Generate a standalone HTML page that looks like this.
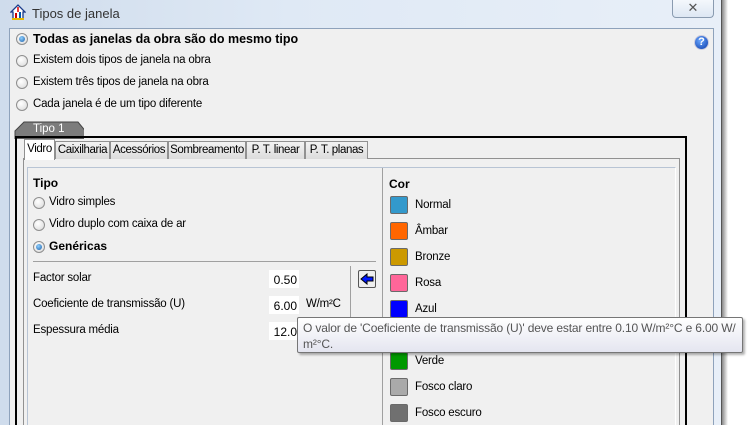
<!DOCTYPE html>
<html><head><meta charset="utf-8"><style>
*{margin:0;padding:0;box-sizing:border-box}
html,body{width:756px;height:425px;overflow:hidden}
body{background:#fff;font-family:"Liberation Sans",Tahoma,sans-serif;font-size:12px;color:#000;position:relative}
.a{position:absolute;white-space:nowrap}
.radio{position:absolute;width:12px;height:12px;border-radius:50%;border:1px solid #8f8f8f;background:radial-gradient(circle at 40% 35%,#fff,#d8d8d8)}
.radio.on::after{content:"";position:absolute;left:2px;top:2px;width:6px;height:6px;border-radius:50%;background:radial-gradient(circle at 40% 35%,#8fd0ff,#1c5fa8)}
.tab{position:absolute;top:141px;height:18px;border:1px solid #919191;border-bottom:none;background:linear-gradient(#f2f2f2,#dcdcdc);padding:2px 0 0;font-size:11.5px;letter-spacing:-0.4px;text-align:center;overflow:hidden;white-space:nowrap}
.inp{position:absolute;left:268px;width:32px;height:20px;background:#fff;border:1px solid #f0f0f0;text-align:right;padding:3px 2px 0 0}
.sw{position:absolute;left:390px;width:18px;height:18px;border:1px solid #6a6a6a;border-radius:2px}
.lbl{position:absolute;left:415px}
.t{font-size:11.5px;letter-spacing:-0.2px}
</style></head><body>
<div class="a" style="left:0;top:0;width:722px;height:425px;background:linear-gradient(90deg,#cfdcec,#dfe9f5 40%,#e8eff8);border-right:1px solid #555"></div>
<div class="a" style="left:722px;top:0;width:6px;height:425px;background:linear-gradient(90deg,#888,#fff)"></div>
<div class="a" style="left:9px;top:28px;width:705px;height:397px;background:#f0f0f0;border:1px solid #8ea2bb;border-bottom:none"></div>
<svg class="a" style="left:10px;top:4px" width="16" height="16" viewBox="0 0 16 16"><path d="M1 8 L8 1 L15 8 L13 8 L13 15 L3 15 L3 8Z" fill="#fff" stroke="#1a3a8a" stroke-width="1.3"/><rect x="5" y="9" width="2" height="5" fill="#c00"/><rect x="9" y="8" width="2" height="6" fill="#05a"/><path d="M8 3 L8 8" stroke="#d00" stroke-width="1.5"/><rect x="2" y="14" width="12" height="2" fill="#e6b800"/></svg>
<div class="a" style="left:32px;top:6px;font-size:13px;color:#333">Tipos de janela</div>
<div class="a" style="left:672px;top:0;width:42px;height:18px;border:1px solid #8a9bb0;border-top:none;border-radius:0 0 4px 4px;background:linear-gradient(#f4f8fc,#dde7f3);text-align:center;font-size:13px;color:#555;line-height:16px">✕</div>
<div class="a" style="left:694px;top:35px;width:15px;height:15px;border-radius:50%;background:radial-gradient(circle at 40% 35%,#6aa7ff,#0a3aa8);border:1px solid #ccd;color:#fff;font-weight:bold;font-size:11px;text-align:center;line-height:13px">?</div>
<div class="radio on" style="left:16px;top:33px"></div><div class="a" style="left:33px;top:32px;font-weight:bold;font-size:12.5px">Todas as janelas da obra são do mesmo tipo</div>
<div class="radio" style="left:16px;top:55px"></div><div class="a t" style="left:33px;top:54px">Existem dois tipos de janela na obra</div>
<div class="radio" style="left:16px;top:77px"></div><div class="a t" style="left:33px;top:76px">Existem três tipos de janela na obra</div>
<div class="radio" style="left:16px;top:99px"></div><div class="a t" style="left:33px;top:98px">Cada janela é de um tipo diferente</div>
<svg class="a" style="left:14px;top:121px" width="70" height="18"><path d="M1 18 L1 10 L10 1 L64 1 L78 18Z" fill="#7c7c7c" stroke="#444"/></svg>
<div class="a" style="left:33px;top:123px;color:#fff;font-size:11.5px">Tipo 1</div>
<div class="a" style="left:15px;top:136px;width:672px;height:300px;border:2px solid #000;border-bottom:none"></div>
<div class="a" style="left:23px;top:158px;width:657px;height:280px;border:1px solid #919191;background:#f0f0f0"></div>
<div class="tab" style="left:24px;top:139px;width:31px;height:21px;background:#fff;padding-top:3px">Vidro</div>
<div class="tab" style="left:55px;width:55px">Caixilharia</div>
<div class="tab" style="left:110px;width:58px">Acessórios</div>
<div class="tab" style="left:168px;width:78px">Sombreamento</div>
<div class="tab" style="left:246px;width:59px">P. T. linear</div>
<div class="tab" style="left:305px;width:63px">P. T. planas</div>
<div class="a" style="left:27px;top:167px;width:649px;height:270px;border:1px solid #b8c4d4;border-right-color:#fff"></div>
<div class="a" style="left:382px;top:168px;width:1px;height:260px;background:#a0a0a0"></div>
<div class="a" style="left:33px;top:176px;font-weight:bold">Tipo</div>
<div class="radio" style="left:33px;top:197px"></div><div class="a t" style="left:49px;top:196px">Vidro simples</div>
<div class="radio" style="left:33px;top:219px"></div><div class="a t" style="left:49px;top:218px">Vidro duplo com caixa de ar</div>
<div class="radio on" style="left:33px;top:241px"></div><div class="a" style="left:49px;top:239px;font-weight:bold">Genéricas</div>
<div class="a" style="left:33px;top:261px;width:343px;height:1px;background:#a0a0a0"></div>
<div class="a t" style="left:33px;top:272px">Factor solar</div>
<div class="a t" style="left:33px;top:298px">Coeficiente de transmissão (U)</div>
<div class="a t" style="left:33px;top:324px">Espessura média</div>
<div class="inp" style="top:269px">0.50</div>
<div class="inp" style="top:295px">6.00</div>
<div class="inp" style="top:321px">12.0</div>
<div class="a t" style="left:306px;top:298px">W/m²C</div>
<div class="a" style="left:350px;top:266px;width:1px;height:54px;background:#a0a0a0"></div>
<div class="a" style="left:358px;top:270px;width:18px;height:18px;border:1px solid #555;border-radius:2px;background:#eee"></div>
<svg class="a" style="left:360px;top:273px" width="14" height="12"><path d="M1 6 L7 1 L7 4 L13 4 L13 8 L7 8 L7 11Z" fill="#0018ff" stroke="#000" stroke-width="1"/></svg>
<div class="a" style="left:389px;top:177px;font-weight:bold">Cor</div>
<div class="sw" style="top:196px;background:#3399cc"></div><div class="lbl t" style="top:199px">Normal</div>
<div class="sw" style="top:222px;background:#ff6600"></div><div class="lbl t" style="top:225px">Âmbar</div>
<div class="sw" style="top:248px;background:#cc9900"></div><div class="lbl t" style="top:251px">Bronze</div>
<div class="sw" style="top:274px;background:#ff6699"></div><div class="lbl t" style="top:277px">Rosa</div>
<div class="sw" style="top:300px;background:#0000ff"></div><div class="lbl t" style="top:303px">Azul</div>
<div class="sw" style="top:352px;background:#009900"></div><div class="lbl t" style="top:355px">Verde</div>
<div class="sw" style="top:378px;background:#aaaaaa"></div><div class="lbl t" style="top:381px">Fosco claro</div>
<div class="sw" style="top:404px;background:#707070"></div><div class="lbl t" style="top:407px">Fosco escuro</div>
<div class="a" style="left:297px;top:317px;width:446px;height:36px;border:1px solid #767676;border-radius:2px;background:linear-gradient(#fff,#e4e5f0);box-shadow:2px 2px 2px rgba(0,0,0,.3);font-size:12px;letter-spacing:-0.15px;color:#555;padding:2px 0 0 5px;line-height:16px;overflow:hidden">O valor de 'Coeficiente de transmissão (U)' deve estar entre 0.10 W/m²°C e 6.00 W/<br>m²°C.</div>
</body></html>
